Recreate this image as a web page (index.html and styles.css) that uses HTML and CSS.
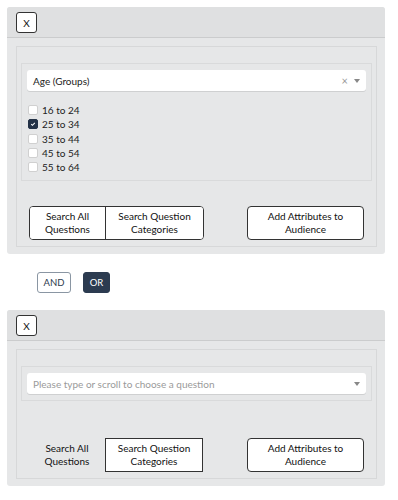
FILE: index.html
```html
<!DOCTYPE html>
<html>
<head>
<meta charset="utf-8">
<link rel="stylesheet" href="styles.css">
</head>
<body>
<div class="panel">
  <div class="panel-head"><button class="close">X</button></div>
  <div class="panel-body">
    <div class="box">
      <div class="inner">
        <div class="select">
          <span class="value">Age (Groups)</span>
          <span class="clear">×</span>
          <span class="arrow"></span>
        </div>
        <ul class="checks">
          <li><span class="cb"></span>16 to 24</li>
          <li><span class="cb on"><svg viewBox="0 0 10 10" width="10" height="10"><path d="M2.8 5.2 L4.3 6.6 L7.3 3.5" fill="none" stroke="#fff" stroke-width="1.3"/></svg></span>25 to 34</li>
          <li><span class="cb"></span>35 to 44</li>
          <li><span class="cb"></span>45 to 54</li>
          <li><span class="cb"></span>55 to 64</li>
        </ul>
      </div>
      <div class="actions">
        <div class="group">
          <button class="seg seg-a">Search All<br>Questions</button>
          <button class="seg seg-b">Search Question<br>Categories</button>
        </div>
        <button class="add">Add Attributes to<br>Audience</button>
      </div>
    </div>
  </div>
</div>

<div class="logic">
  <button class="lbtn">AND</button>
  <button class="lbtn dark">OR</button>
</div>

<div class="panel">
  <div class="panel-head"><button class="close">X</button></div>
  <div class="panel-body">
    <div class="box">
      <div class="inner inner-empty">
        <div class="select">
          <span class="placeholder">Please type or scroll to choose a question</span>
          <span class="arrow"></span>
        </div>
      </div>
      <div class="actions actions-2">
        <div class="group group-2">
          <button class="seg2 plain">Search All<br>Questions</button>
          <button class="seg2 boxed">Search Question<br>Categories</button>
        </div>
        <button class="add">Add Attributes to<br>Audience</button>
      </div>
    </div>
  </div>
</div>
</body>
</html>
```

FILE: styles.css
```css
* { box-sizing: border-box; }
body {
  margin: 0;
  background: #fff;
  font-family: Lato, "Noto Sans", sans-serif;
  font-size: 10px;
  color: #222;
}
button { font-family: inherit; cursor: pointer; }

.panel {
  width: 378px;
  margin: 7px 0 0 7px;
  background: #e6e7e8;
  border-radius: 3px;
  overflow: hidden;
}
.panel-head {
  height: 31px;
  background: #dfe0e1;
  border-bottom: 1px solid #cbcccd;
  padding: 5px 0 0 9px;
}
.close {
  width: 21px;
  height: 21px;
  padding: 0;
  background: #fff;
  border: 1px solid #333;
  border-radius: 3px;
  font-size: 10px;
  color: #111;
  line-height: 18px;
}
.panel-body {
  padding: 8px 8px 7px 9px;
}
.box {
  border: 1px solid #d7d8d9;
  padding: 16px 4px 6px 4px;
}
.inner {
  border: 1px solid #d9dadb;
  padding: 6px 5px 6px 5px;
}
.inner-empty { padding-bottom: 6px; }
.select {
  height: 21px;
  background: #fff;
  border-radius: 3px;
  box-shadow: 0 1px 0 #cfd0d1;
  display: flex;
  align-items: center;
  padding: 0 6px;
}
.value { flex: 1; color: #222; }
.placeholder { flex: 1; color: #9a9a9a; }
.clear { color: #999; font-size: 11px; margin-right: 6px; }
.arrow {
  width: 0; height: 0;
  border-left: 3.5px solid transparent;
  border-right: 3.5px solid transparent;
  border-top: 4px solid #888;
}
.checks {
  list-style: none;
  margin: 12px 0 0 0;
  padding: 0 0 0 1px;
}
.checks li {
  display: flex;
  align-items: center;
  height: 14.3px;
  color: #222;
}
.cb {
  width: 10px; height: 10px;
  border: 1px solid #d0d0d0;
  border-radius: 2px;
  background: #fff;
  margin-right: 4px;
  display: inline-flex;
  align-items: center;
  justify-content: center;
}
.cb.on { background: #243247; border-color: #243247; }
.cb svg { display: block; }

.actions {
  display: flex;
  justify-content: space-between;
  align-items: center;
  margin-top: 25px;
  padding: 0 8px 0 8px;
}
.actions-2 { margin-top: 37px; }
.group {
  display: flex;
  border: 1px solid #333;
  border-radius: 4px;
  background: #fff;
  overflow: hidden;
}
.seg {
  height: 32px;
  border: 0;
  background: #fff;
  font-size: 10px;
  color: #111;
  line-height: 13px;
  padding: 0;
}
.seg-a { width: 76px; border-right: 1px solid #333; }
.seg-b { width: 97px; }
.group-2 { border: 0; background: transparent; border-radius: 0; }
.seg2 {
  height: 34px;
  font-size: 10px;
  color: #111;
  line-height: 13px;
  padding: 0;
}
.plain { width: 76px; background: transparent; border: 0; }
.boxed { width: 98px; background: #fff; border: 1px solid #333; }
.add {
  width: 117px;
  height: 34px;
  background: #fff;
  border: 1px solid #333;
  border-radius: 4px;
  font-size: 10px;
  color: #111;
  line-height: 13px;
  padding: 0;
}

.logic {
  display: flex;
  gap: 12px;
  padding: 18px 0 0 37px;
  height: 49px;
}
.lbtn {
  width: 34px;
  height: 21px;
  padding: 0;
  border: 1px solid #8a96a3;
  border-radius: 3px;
  background: #fff;
  font-size: 9.5px;
  color: #2c3a4d;
}
.lbtn.dark {
  width: 27px;
  background: #2c3b50;
  border-color: #2c3b50;
  color: #fff;
}
```
